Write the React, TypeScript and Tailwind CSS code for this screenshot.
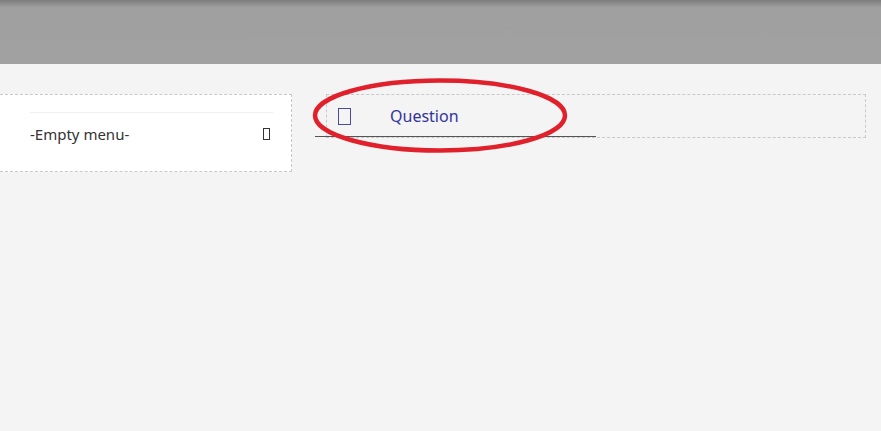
/* Vista de editor de menú: cabecera gris, caja de menú vacía y pregunta resaltada. */

export default function App() {
  return (
    <div className="relative h-[431px] w-[881px] overflow-hidden bg-[#f4f4f4] font-['Noto_Sans',sans-serif]">
      {/* Cabecera */}
      <header className="h-16 bg-gradient-to-b from-[#7c7c7c] via-[#a0a0a0] via-[12%] to-[#a1a1a1]" />

      <div className="flex items-start gap-[34px] pt-[30px]">
        {/* Menú vacío */}
        <div className="w-[292px] border-y border-r border-dashed border-[#c8c8c8] bg-white pb-[25px] pl-[30px] pr-[18px] pt-[17px]">
          <div className="h-px bg-[#efefef]" />
          <div className="flex items-center justify-between pr-[3px] pt-[10px]">
            <span className="text-[15px] text-[#333]">-Empty menu-</span>
            <span className="mb-[1px] h-[12px] w-[7px] border border-[#333]" />
          </div>
        </div>

        {/* Pregunta */}
        <div className="relative flex h-[44px] w-[540px] items-center border border-dashed border-[#c8c8c8]">
          <span className="ml-[11px] h-[17px] w-[13px] border border-[#4a4aa0]" />
          <span className="ml-[39px] text-[16px] text-[#33339a]">Question</span>
          <span className="absolute bottom-0 left-[-12px] h-px w-[281px] bg-[#555]" />
        </div>
      </div>

      {/* Resaltado rojo */}
      <svg className="absolute left-0 top-0" width="881" height="431" aria-hidden>
        <ellipse cx="440" cy="115.5" rx="125" ry="35" fill="none" stroke="#e0202a" strokeWidth="4.5" />
      </svg>
    </div>
  )
}
